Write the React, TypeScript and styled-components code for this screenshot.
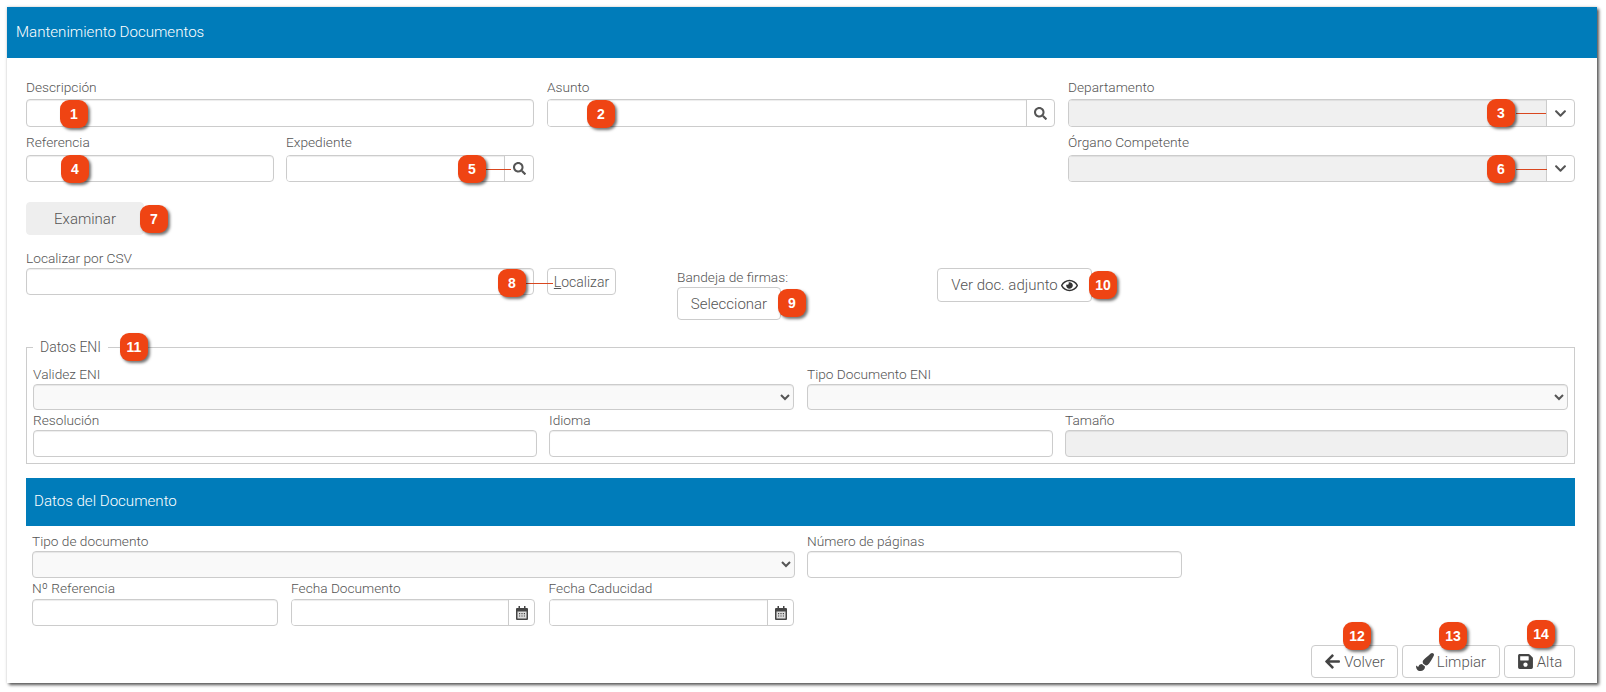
import React from 'react'
import styled, { createGlobalStyle } from 'styled-components'
import { FaSearch, FaChevronDown, FaRegEye, FaArrowLeft, FaPaintBrush, FaSave } from 'react-icons/fa'

const GlobalStyle = createGlobalStyle`
  html, body {
    margin: 0;
    padding: 0;
    background: #fff;
  }
  body {
    font-family: Roboto, "Liberation Sans", sans-serif;
    font-weight: 300;
    font-size: 14px;
    color: #555;
  }
`

const Page = styled.div`
  width: 1606px;
  height: 692px;
  padding: 7px 0 0 7px;
  box-sizing: border-box;
  overflow: hidden;
`

const Panel = styled.div`
  position: relative;
  width: 1590px;
  height: 676px;
  background: #fff;
  box-shadow: 2px 2px 3px rgba(0, 0, 0, 0.65), 0 0 3px rgba(0, 0, 0, 0.15);
`

const Header = styled.div<{ $inset?: boolean }>`
  display: flex;
  align-items: center;
  box-sizing: border-box;
  height: ${p => (p.$inset ? '48px' : '51px')};
  padding-left: ${p => (p.$inset ? '8px' : '9px')};
  padding-bottom: ${p => (p.$inset ? '3px' : '2px')};
  background: #007cba;
  color: #fff;
  font-size: 15.1px;
`

const Body = styled.div`
  padding: 18px 22px 0 19px;
`

const ThreeCols = styled.div`
  display: grid;
  grid-template-columns: 508px 508px 507px;
  column-gap: 13px;
`

const TwoCols = styled.div`
  display: grid;
  grid-template-columns: 248px 248px;
  column-gap: 12px;
`

const Field = styled.div<{ $width?: number }>`
  display: flex;
  flex-direction: column;
  ${p => (p.$width ? `width: ${p.$width}px;` : '')}
`

const Label = styled.label<{ $h?: number; $pad?: number }>`
  display: flex;
  align-items: flex-end;
  box-sizing: border-box;
  height: ${p => p.$h ?? 20}px;
  padding-bottom: ${p => p.$pad ?? 0}px;
  font-size: 13.7px;
  line-height: 20px;
  white-space: nowrap;
`

const Input = styled.input<{ $h?: number; $off?: boolean }>`
  box-sizing: border-box;
  display: block;
  width: 100%;
  min-width: 0;
  height: ${p => p.$h ?? 27}px;
  padding: 0 8px;
  border: 1px solid #ccc;
  border-radius: 4px;
  background: ${p => (p.$off ? '#f0f0f0' : '#fff')};
  box-shadow: inset 0 1px 1px rgba(0, 0, 0, 0.075);
  outline: none;
`

const Select = styled.select<{ $h?: number }>`
  box-sizing: border-box;
  display: block;
  width: 100%;
  height: ${p => p.$h ?? 26}px;
  border: 1px solid #ccc;
  border-radius: 4px;
  background-color: #f9f9f9;
  color: #555;
  box-shadow: inset 0 1px 1px rgba(0, 0, 0, 0.075);
  outline: none;
`

const Group = styled.div<{ $h?: number }>`
  display: flex;
  box-sizing: border-box;
  height: ${p => p.$h ?? 27}px;
  border: 1px solid #ccc;
  border-radius: 4px;
  overflow: hidden;
  background: #fff;
`

const GroupFill = styled.div<{ $off?: boolean }>`
  flex: 1;
  background: ${p => (p.$off ? '#f0f0f0' : '#fff')};
  box-shadow: inset 0 1px 1px rgba(0, 0, 0, 0.075);
`

const Addon = styled.div<{ $w?: number; $icon?: number }>`
  display: flex;
  align-items: center;
  justify-content: center;
  box-sizing: border-box;
  width: ${p => p.$w ?? 28}px;
  border-left: 1px solid #ccc;
  color: #555;
  font-size: ${p => p.$icon ?? 13}px;
`

const Button = styled.button<{ $w: number; $h: number; $size?: number }>`
  display: inline-flex;
  align-items: center;
  justify-content: center;
  gap: 3px;
  box-sizing: border-box;
  width: ${p => p.$w}px;
  height: ${p => p.$h}px;
  padding: 0;
  border: 1px solid #ccc;
  border-radius: 4px;
  background: #fff;
  color: #555;
  font: inherit;
  font-size: ${p => p.$size ?? 15}px;
  white-space: nowrap;
`

const GreyButton = styled(Button)`
  margin-top: 20px;
  border-color: #eee;
  background: #eee;
`

const UploadRow = styled.div`
  display: flex;
  align-items: flex-start;
  margin-top: 11px;
`

const Pushed = styled.div<{ $left: number; $top: number; $w?: number }>`
  margin-left: ${p => p.$left}px;
  margin-top: ${p => p.$top}px;
  ${p => (p.$w ? `width: ${p.$w}px;` : '')}
`

const Fieldset = styled.fieldset`
  box-sizing: border-box;
  width: 1549px;
  margin: 17px 0 0;
  padding: 0 6px 6px;
  border: 1px solid #ccc;
`

const Legend = styled.legend`
  margin-left: 0;
  padding: 0 7px;
  line-height: 20px;
`

const FieldsetRows = styled.div`
  margin-top: 7px;
`

const EniTop = styled.div`
  display: grid;
  grid-template-columns: 761px 761px;
  column-gap: 13px;
`

const EniBottom = styled.div`
  display: grid;
  grid-template-columns: 504px 504px 503px;
  column-gap: 12px;
`

const Section = styled.div`
  margin-top: 14px;
`

const DocRows = styled.div`
  padding: 5px 6px 0 6px;
`

const DocTop = styled.div`
  display: grid;
  grid-template-columns: 763px 375px;
  column-gap: 12px;
`

const DocBottom = styled.div`
  display: grid;
  grid-template-columns: 245.5px 244px 245.5px;
  column-gap: 13.5px;
`

const Footer = styled.div`
  display: flex;
  justify-content: flex-end;
  gap: 4px;
  margin-top: 19px;
`

const FooterIcon = styled.span<{ $size?: number }>`
  display: inline-flex;
  font-size: ${p => p.$size ?? 17}px;
  color: #444;
`

const Badge = styled.span<{ $x: number; $y: number }>`
  position: absolute;
  left: ${p => p.$x - 7}px;
  top: ${p => p.$y - 7}px;
  display: flex;
  align-items: center;
  justify-content: center;
  width: 28px;
  height: 28px;
  border-radius: 9px;
  background: #ef4413;
  box-shadow: 2px 2px 3px rgba(0, 0, 0, 0.55);
  color: #fff;
  font-family: "Liberation Sans", sans-serif;
  font-weight: 700;
  font-size: 14px;
`

const Leader = styled.span<{ $x: number; $y: number; $w: number }>`
  position: absolute;
  left: ${p => p.$x - 7}px;
  top: ${p => p.$y - 7}px;
  width: ${p => p.$w}px;
  height: 1px;
  background: #d9471f;
`

const CalendarIcon = () => (
  <svg width="12" height="14" viewBox="0 0 12 14" fill="#444">
    <rect x="2.5" y="0" width="1.5" height="3" />
    <rect x="8" y="0" width="1.5" height="3" />
    <path d="M1 2h10a1 1 0 0 1 1 1v10a1 1 0 0 1-1 1H1a1 1 0 0 1-1-1V3a1 1 0 0 1 1-1z" />
    <rect x="1.5" y="5.5" width="9" height="7" fill="#ddd" />
    <path d="M3 7h1.2v1.2H3zM5.4 7h1.2v1.2H5.4zM7.8 7H9v1.2H7.8zM3 9.4h1.2v1.2H3zM5.4 9.4h1.2v1.2H5.4zM7.8 9.4H9v1.2H7.8z" />
  </svg>
)

const App = () => (
  <Page>
    <GlobalStyle />
    <Panel>
      <Header>Mantenimiento Documentos</Header>
      <Body>
        <ThreeCols>
          <Field>
            <Label $h={23} $pad={2}>Descripción</Label>
            <Input $h={28} />
          </Field>
          <Field>
            <Label $h={23} $pad={2}>Asunto</Label>
            <Group $h={28}>
              <GroupFill />
              <Addon><FaSearch /></Addon>
            </Group>
          </Field>
          <Field>
            <Label $h={23} $pad={2}>Departamento</Label>
            <Group $h={28}>
              <GroupFill $off />
              <Addon $icon={13}><FaChevronDown /></Addon>
            </Group>
          </Field>
        </ThreeCols>
        <ThreeCols>
          <TwoCols>
            <Field>
              <Label $h={28} $pad={3}>Referencia</Label>
              <Input />
            </Field>
            <Field>
              <Label $h={28} $pad={3}>Expediente</Label>
              <Group>
                <GroupFill />
                <Addon $w={29}><FaSearch /></Addon>
              </Group>
            </Field>
          </TwoCols>
          <div />
          <Field>
            <Label $h={28} $pad={3}>Órgano Competente</Label>
            <Group>
              <GroupFill $off />
              <Addon $icon={13}><FaChevronDown /></Addon>
            </Group>
          </Field>
        </ThreeCols>

        <GreyButton $w={118} $h={33}>Examinar</GreyButton>

        <UploadRow>
          <Field $width={508}>
            <Label $h={22}>Localizar por CSV</Label>
            <Input />
          </Field>
          <Pushed $left={13} $top={22}>
            <Button $w={69} $h={27} $size={14}><span><u>L</u>ocalizar</span></Button>
          </Pushed>
          <Pushed $left={61} $top={21} $w={104}>
            <Label>Bandeja de firmas:</Label>
            <Button $w={104} $h={33}>Seleccionar</Button>
          </Pushed>
          <Pushed $left={156} $top={22}>
            <Button $w={155} $h={34}>Ver doc. adjunto <FaRegEye size={17} color="#333" /></Button>
          </Pushed>
        </UploadRow>

        <Fieldset>
          <Legend>Datos ENI</Legend>
          <FieldsetRows>
            <EniTop>
              <Field>
                <Label>Validez ENI</Label>
                <Select />
              </Field>
              <Field>
                <Label>Tipo Documento ENI</Label>
                <Select />
              </Field>
            </EniTop>
            <EniBottom>
              <Field>
                <Label>Resolución</Label>
                <Input />
              </Field>
              <Field>
                <Label>Idioma</Label>
                <Input />
              </Field>
              <Field>
                <Label>Tamaño</Label>
                <Input $off />
              </Field>
            </EniBottom>
          </FieldsetRows>
        </Fieldset>

        <Section>
          <Header $inset>Datos del Documento</Header>
          <DocRows>
            <DocTop>
              <Field>
                <Label $pad={0}>Tipo de documento</Label>
                <Select $h={27} />
              </Field>
              <Field>
                <Label $pad={0}>Número de páginas</Label>
                <Input />
              </Field>
            </DocTop>
            <DocBottom>
              <Field>
                <Label $h={21} $pad={1}>Nº Referencia</Label>
                <Input />
              </Field>
              <Field>
                <Label $h={21} $pad={1}>Fecha Documento</Label>
                <Group>
                  <GroupFill />
                  <Addon $w={26}><CalendarIcon /></Addon>
                </Group>
              </Field>
              <Field>
                <Label $h={21} $pad={1}>Fecha Caducidad</Label>
                <Group>
                  <GroupFill />
                  <Addon $w={26}><CalendarIcon /></Addon>
                </Group>
              </Field>
            </DocBottom>
          </DocRows>
          <Footer>
            <Button $w={87} $h={33}><FooterIcon><FaArrowLeft /></FooterIcon>Volver</Button>
            <Button $w={98} $h={33}><FooterIcon $size={18}><FaPaintBrush /></FooterIcon>Limpiar</Button>
            <Button $w={71} $h={33}><FooterIcon><FaSave /></FooterIcon>Alta</Button>
          </Footer>
        </Section>
      </Body>

      <Badge $x={60} $y={100}>1</Badge>
      <Badge $x={587} $y={100}>2</Badge>
      <Leader $x={1516} $y={113} $w={30} />
      <Badge $x={1487} $y={99}>3</Badge>
      <Badge $x={61} $y={155}>4</Badge>
      <Leader $x={485} $y={169} $w={26} />
      <Badge $x={458} $y={155}>5</Badge>
      <Leader $x={1516} $y={169} $w={31} />
      <Badge $x={1487} $y={155}>6</Badge>
      <Badge $x={140} $y={205}>7</Badge>
      <Leader $x={526} $y={283} $w={27} />
      <Badge $x={498} $y={269}>8</Badge>
      <Badge $x={778} $y={289}>9</Badge>
      <Badge $x={1089} $y={271}>10</Badge>
      <Badge $x={120} $y={333}>11</Badge>
      <Badge $x={1343} $y={622}>12</Badge>
      <Badge $x={1439} $y={622}>13</Badge>
      <Badge $x={1527} $y={620}>14</Badge>
    </Panel>
  </Page>
)

export default App
